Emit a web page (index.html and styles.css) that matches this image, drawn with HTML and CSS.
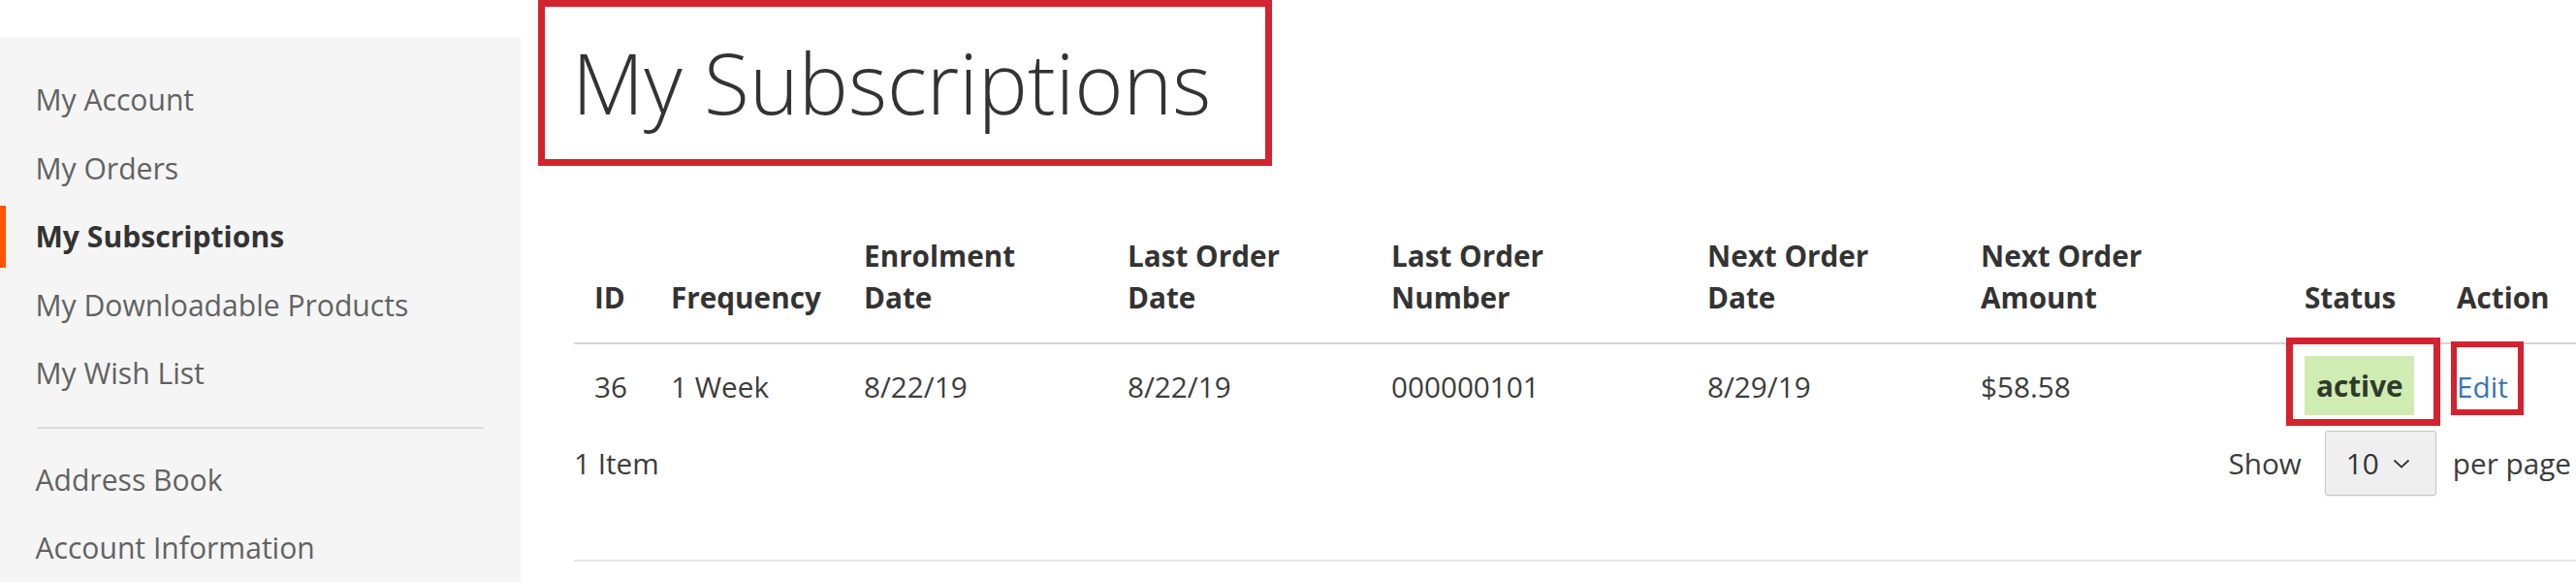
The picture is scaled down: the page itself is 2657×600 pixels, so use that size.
FILE: index.html
```html
<!DOCTYPE html>
<html lang="en">
<head>
<meta charset="utf-8">
<title>My Subscriptions</title>
<link rel="stylesheet" href="styles.css">
</head>
<body>
<div class="page">
  <aside class="sidebar">
    <ul class="nav">
      <li class="nav-item"><a class="nav-link" href="#">My Account</a></li>
      <li class="nav-item"><a class="nav-link" href="#">My Orders</a></li>
      <li class="nav-item current"><strong class="nav-link">My Subscriptions</strong></li>
      <li class="nav-item"><a class="nav-link" href="#">My Downloadable Products</a></li>
      <li class="nav-item"><a class="nav-link" href="#">My Wish List</a></li>
      <li class="nav-delim"></li>
      <li class="nav-item"><a class="nav-link" href="#">Address Book</a></li>
      <li class="nav-item"><a class="nav-link" href="#">Account Information</a></li>
    </ul>
  </aside>
  <main class="main">
    <div class="title-box"><h1 class="page-title">My Subscriptions</h1></div>
    <div class="content">
      <table class="subs">
        <colgroup>
          <col class="c-id"><col class="c-freq"><col class="c-enrol"><col class="c-ldate"><col class="c-lnum"><col class="c-ndate"><col class="c-namt"><col class="c-status"><col class="c-action">
        </colgroup>
        <thead>
          <tr>
            <th>ID</th>
            <th>Frequency</th>
            <th>Enrolment<br>Date</th>
            <th>Last Order<br>Date</th>
            <th>Last Order<br>Number</th>
            <th>Next Order<br>Date</th>
            <th>Next Order<br>Amount</th>
            <th>Status</th>
            <th>Action</th>
          </tr>
        </thead>
        <tbody>
          <tr>
            <td>36</td>
            <td>1 Week</td>
            <td>8/22/19</td>
            <td>8/22/19</td>
            <td>000000101</td>
            <td>8/29/19</td>
            <td>$58.58</td>
            <td class="status"><span class="badge">active</span></td>
            <td class="action"><a class="edit" href="#">Edit</a></td>
          </tr>
        </tbody>
      </table>
      <div class="toolbar">
        <span class="amount">1 Item</span>
        <div class="limiter">
          <span class="lim-label">Show</span>
          <div class="select">
            <span class="select-value">10</span>
            <svg class="chevron" width="18" height="10" viewBox="0 0 18 10"><polyline points="1.5,1.5 9,8.5 16.5,1.5" fill="none" stroke="#333" stroke-width="1.8"/></svg>
          </div>
          <span class="lim-text">per page</span>
        </div>
      </div>
      <div class="rule"></div>
    </div>
  </main>
</div>
</body>
</html>
```
FILE: styles.css
```css
html, body {
  margin: 0;
  padding: 0;
  background: #fff;
}
body {
  width: 2657px;
  height: 600px;
  overflow: hidden;
  font-family: "Open Sans", "Liberation Sans", sans-serif;
  color: #333;
}
.page {
  display: flex;
  align-items: flex-start;
  height: 600px;
  overflow: hidden;
}

/* Sidebar */
.sidebar {
  flex: none;
  width: 537px;
  margin-top: 38px;
  min-height: 600px;
  padding: 33px 0 40px;
  background: #f5f5f5;
}
.nav {
  list-style: none;
  margin: 0;
  padding: 0;
}
.nav-item {
  margin-top: 6.5px;
}
.nav-item:first-child {
  margin-top: 0;
}
.nav-link {
  display: block;
  padding: 11px 18px 11px 30.5px;
  border-left: 6px solid transparent;
  font-size: 30.1px;
  line-height: 42px;
  color: #626262;
  text-decoration: none;
  font-weight: 400;
}
.nav-item.current .nav-link {
  border-left-color: #ff5501;
  color: #333;
  font-weight: 700;
}
.nav-delim {
  height: 2px;
  background: #dadada;
  margin: 23px 38px 20.5px 38px;
}

/* Main */
.main {
  flex: 1;
  min-width: 0;
  margin-left: 18px;
}
.title-box {
  width: 757px;
  height: 171px;
  box-sizing: border-box;
  border: 7px solid #d2232e;
  padding: 27.6px 0 0 28px;
}
.page-title {
  margin: 0;
  font-size: 86px;
  font-weight: 300;
  line-height: 100px;
  color: #333;
  white-space: nowrap;
}
.content {
  margin: 53.5px 0 0 37px;
}

/* Table */
.subs {
  width: 2065px;
  table-layout: fixed;
  border-collapse: separate;
  border-spacing: 0;
  font-size: 29.7px;
  line-height: 43px;
}
.c-id { width: 79px; }
.c-freq { width: 199px; }
.c-enrol { width: 272px; }
.c-ldate { width: 272px; }
.c-lnum { width: 326px; }
.c-ndate { width: 282px; }
.c-namt { width: 334px; }
.c-status { width: 157px; }
.c-action { width: 144px; }

.subs th {
  text-align: left;
  vertical-align: bottom;
  font-weight: 700;
  color: #333;
  padding: 17px 21px 25.5px 21px;
  border-bottom: 2px solid #d4d4d4;
  white-space: nowrap;
}
.subs td {
  vertical-align: top;
  padding: 21.5px 21px 20.5px 21px;
  color: #3c3c3c;
  white-space: nowrap;
}
.subs td.status {
  position: relative;
  padding: 12px 21px 12px 21px;
}
.subs td.status::after {
  content: "";
  position: absolute;
  left: 2px;
  right: -4px;
  top: -7px;
  bottom: 1px;
  border: 7px solid #d2232e;
}
.badge {
  display: inline-block;
  padding: 9px 11px 9px 12px;
  background: #cfecb2;
  font-weight: 700;
  color: #2f3a2b;
  line-height: 43px;
}
.subs td.action {
  position: relative;
}
.subs td.action::after {
  content: "";
  position: absolute;
  left: 15px;
  top: -3px;
  width: 75px;
  height: 76px;
  box-sizing: border-box;
  border: 6px solid #d2232e;
}
.edit {
  color: #3578b8;
  text-decoration: none;
}

/* Toolbar */
.toolbar {
  display: flex;
  justify-content: space-between;
  align-items: center;
  height: 67px;
  margin-top: 4px;
  font-size: 29.7px;
  line-height: 43px;
  color: #3c3c3c;
}
.limiter {
  display: flex;
  align-items: center;
  margin-right: 5px;
}
.select {
  display: flex;
  align-items: center;
  width: 115px;
  height: 67px;
  box-sizing: border-box;
  margin: 0 17px 0 24px;
  padding-left: 21px;
  border: 1px solid #c6c6c6;
  border-radius: 3px;
  background: #efefef;
  box-shadow: 0 1px 2px rgba(0, 0, 0, 0.08);
  color: #333;
}
.chevron {
  margin-left: 14px;
}
.rule {
  height: 2px;
  margin-top: 66px;
  background: #e6e6e6;
}
```
